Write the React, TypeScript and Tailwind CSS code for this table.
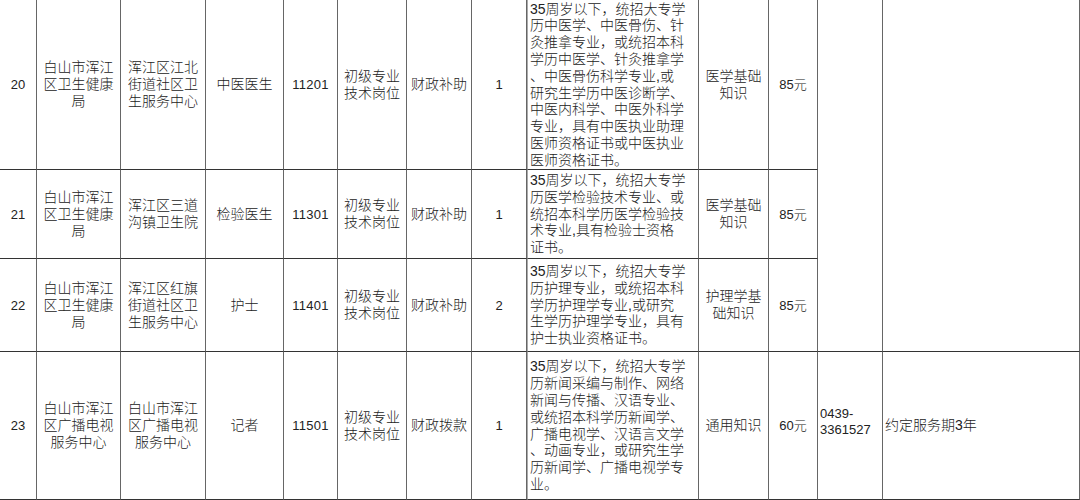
const orgHealth = ["白山市浑江", "区卫生健康", "局"];
const postType = ["初级专业", "技术岗位"];

const rows = [
  {
    no: "20",
    org: orgHealth,
    unit: ["浑江区江北", "街道社区卫", "生服务中心"],
    post: ["中医医生"],
    code: "11201",
    fund: "财政补助",
    count: "1",
    req: [
      "35周岁以下，统招大专学",
      "历中医学、中医骨伤、针",
      "灸推拿专业，或统招本科",
      "学历中医学、针灸推拿学",
      "、中医骨伤科学专业,或",
      "研究生学历中医诊断学、",
      "中医内科学、中医外科学",
      "专业，具有中医执业助理",
      "医师资格证书或中医执业",
      "医师资格证书。",
    ],
    exam: ["医学基础", "知识"],
    fee: "85元",
  },
  {
    no: "21",
    org: orgHealth,
    unit: ["浑江区三道", "沟镇卫生院"],
    post: ["检验医生"],
    code: "11301",
    fund: "财政补助",
    count: "1",
    req: [
      "35周岁以下，统招大专学",
      "历医学检验技术专业、或",
      "统招本科学历医学检验技",
      "术专业,具有检验士资格",
      "证书。",
    ],
    exam: ["医学基础", "知识"],
    fee: "85元",
  },
  {
    no: "22",
    org: orgHealth,
    unit: ["浑江区红旗", "街道社区卫", "生服务中心"],
    post: ["护士"],
    code: "11401",
    fund: "财政补助",
    count: "2",
    req: [
      "35周岁以下，统招大专学",
      "历护理专业，或统招本科",
      "学历护理学专业,或研究",
      "生学历护理学专业，具有",
      "护士执业资格证书。",
    ],
    exam: ["护理学基", "础知识"],
    fee: "85元",
  },
  {
    no: "23",
    org: ["白山市浑江", "区广播电视", "服务中心"],
    unit: ["白山市浑江", "区广播电视", "服务中心"],
    post: ["记者"],
    code: "11501",
    fund: "财政拨款",
    count: "1",
    req: [
      "35周岁以下，统招大专学",
      "历新闻采编与制作、网络",
      "新闻与传播、汉语专业、",
      "或统招本科学历新闻学、",
      "广播电视学、汉语言文学",
      "、动画专业，或研究生学",
      "历新闻学、广播电视学专",
      "业。",
    ],
    exam: ["通用知识"],
    fee: "60元",
  },
];

const cell = "border-r border-b border-r-[#666] border-b-[#333] flex items-center overflow-hidden";
const center = `${cell} justify-center text-center`;

function Lines({ lines }: { lines: string[] }) {
  return (
    <div>
      {lines.map((l, i) => (
        <div key={i} className="whitespace-nowrap">{l}</div>
      ))}
    </div>
  );
}

export default function App() {
  return (
    <div className="w-[1080px] h-[500px] overflow-hidden bg-white text-[#222] font-light font-['Liberation_Sans','Noto_Sans_CJK_SC',sans-serif] text-[14px] leading-[17px]">
      <div className="grid grid-cols-[37px_84px_85px_78px_54px_69px_65px_55px_172px_70px_49px_65px_197px] grid-rows-[170px_89px_93px_148px]">
        {rows.map((r, i) => (
          <div key={r.no} className="contents">
            <div className={`${center} text-[13px]`}>{r.no}</div>
            <div className={center}><Lines lines={r.org} /></div>
            <div className={center}><Lines lines={r.unit} /></div>
            <div className={center}><Lines lines={r.post} /></div>
            <div className={`${center} text-[13px] tracking-[0.3px]`}>{r.code}</div>
            <div className={center}><Lines lines={postType} /></div>
            <div className={center}>{r.fund}</div>
            <div className={`${center} text-[13px]`}>{r.count}</div>
            <div className={`${cell} border-l border-l-[#aaa] pl-[2px] leading-[16.8px]`}>
              <Lines lines={r.req} />
            </div>
            <div className={center}><Lines lines={r.exam} /></div>
            <div className={`${center} text-[13px]`}>{r.fee}</div>
            {i === 0 && (
              <>
                <div className={`${cell} row-span-3`} />
                <div className={`${cell} row-span-3 border-r-[#222]`} />
              </>
            )}
            {i === 3 && (
              <>
                <div className={`${cell} pl-[2px] pb-[8px] text-[13px] leading-[16px]`}>
                  <Lines lines={["0439-", "3361527"]} />
                </div>
                <div className={`${cell} pl-[2px] border-r-[#222]`}>约定服务期3年</div>
              </>
            )}
          </div>
        ))}
      </div>
    </div>
  );
}
